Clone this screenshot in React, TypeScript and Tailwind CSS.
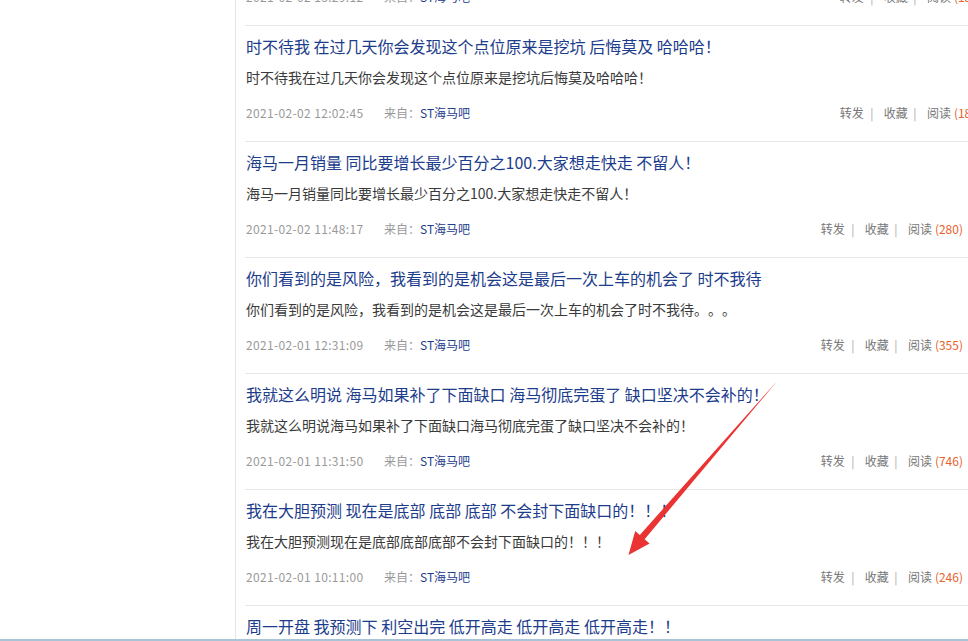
const POSTS = [
  {
    title: '海马汽车 节后必定开门红 大家拭目以待！',
    desc: '海马汽车节后必定开门红大家拭目以待！',
    time: '2021-02-02 13:29:12',
    reads: '187',
    shift: true,
  },
  {
    title: '时不待我 在过几天你会发现这个点位原来是挖坑 后悔莫及 哈哈哈！',
    desc: '时不待我在过几天你会发现这个点位原来是挖坑后悔莫及哈哈哈！',
    time: '2021-02-02 12:02:45',
    reads: '187',
    shift: true,
  },
  {
    title: '海马一月销量 同比要增长最少百分之100.大家想走快走 不留人！',
    desc: '海马一月销量同比要增长最少百分之100.大家想走快走不留人！',
    time: '2021-02-02 11:48:17',
    reads: '280',
    shift: false,
  },
  {
    title: '你们看到的是风险，我看到的是机会这是最后一次上车的机会了 时不我待',
    desc: '你们看到的是风险，我看到的是机会这是最后一次上车的机会了时不我待。。。',
    time: '2021-02-01 12:31:09',
    reads: '355',
    shift: false,
  },
  {
    title: '我就这么明说 海马如果补了下面缺口 海马彻底完蛋了 缺口坚决不会补的！',
    desc: '我就这么明说海马如果补了下面缺口海马彻底完蛋了缺口坚决不会补的！',
    time: '2021-02-01 11:31:50',
    reads: '746',
    shift: false,
  },
  {
    title: '我在大胆预测 现在是底部 底部 底部 不会封下面缺口的！！！',
    desc: '我在大胆预测现在是底部底部底部不会封下面缺口的！！！',
    time: '2021-02-01 10:11:00',
    reads: '246',
    shift: false,
  },
  {
    title: '周一开盘 我预测下 利空出完 低开高走 低开高走 低开高走！！',
    desc: '周一开盘我预测下利空出完低开高走低开高走低开高走！！',
    time: '2021-01-31 21:05:33',
    reads: '312',
    shift: false,
  },
]

function Post({ post }: { post: (typeof POSTS)[number] }) {
  return (
    <div className="border-t border-[#e6e6e6] pl-px pt-[8px] pb-[19px]">
      <p className="h-[24px] text-[16px] leading-[24px] text-[#1c3c8c] whitespace-nowrap">{post.title}</p>
      <p className="mt-[9px] h-[20px] text-[14px] leading-[20px] text-[#3a3a3a] whitespace-nowrap">{post.desc}</p>
      <div className="mt-[17px] flex h-[18px] items-center justify-between text-[12px] leading-[18px] whitespace-nowrap">
        <div className="flex">
          <span className="w-[138px] tracking-[0.35px] text-[#999999]">{post.time}</span>
          <span className="text-[#999999]">来自：</span>
          <span className="text-[#1c3c8c]">ST海马吧</span>
        </div>
        <div className={post.shift ? 'flex mr-[-14px]' : 'flex mr-[5px]'}>
          <span className="text-[#777777]">转发</span>
          <span className="ml-[6px] mr-[10px] inline-block w-[4px] text-center text-[#aaaaaa]">|</span>
          <span className="text-[#777777]">收藏</span>
          <span className="ml-[5px] mr-[10px] inline-block w-[4px] text-center text-[#aaaaaa]">|</span>
          <span className="text-[#777777]">阅读</span>
          <span className="ml-[3px] text-[#e8612c]">({post.reads})</span>
        </div>
      </div>
    </div>
  )
}

export default function App() {
  return (
    <div
      className="relative flex h-[641px] w-[968px] flex-col overflow-hidden bg-white [text-spacing-trim:space-all]"
      style={{ fontFamily: '"Noto Sans CJK SC", "Microsoft YaHei", sans-serif' }}
    >
      <div className="flex h-[639px]">
        {/* left column */}
        <div className="w-[236px] shrink-0 border-r border-[#e5e5e5]" />

        {/* post list */}
        <div className="min-w-0 flex-1 pl-[9px]">
          <div className="mt-[-91px]">
            {POSTS.map((p) => (
              <Post key={p.time} post={p} />
            ))}
          </div>
        </div>
      </div>
      <div className="h-[2px] bg-[#a9c4d6]" />

      {/* red annotation arrow */}
      <svg className="pointer-events-none absolute inset-0" width="968" height="641" viewBox="0 0 968 641">
        <polygon points="778.4,379.6 777.6,380.4 639.6,535.2 644.4,539.4" fill="#ea3333" />
        <polygon points="628.5,555 635.2,531 649.6,543.6" fill="#ea3333" />
      </svg>
    </div>
  )
}
